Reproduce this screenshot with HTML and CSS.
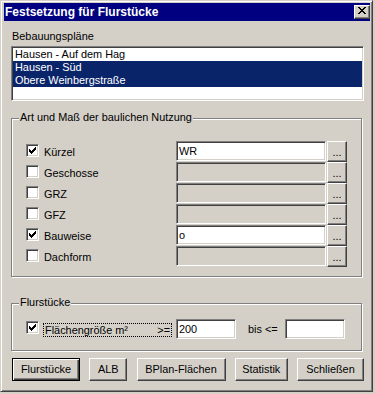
FILE: index.html
```html
<!DOCTYPE html>
<html lang="de">
<head>
<meta charset="utf-8">
<title>Festsetzung für Flurstücke</title>
<link rel="stylesheet" href="styles.css">
</head>
<body>
<div class="window">
  <div class="titlebar">
    <span class="title">Festsetzung für Flurstücke</span>
    <div class="close">
      <svg width="8" height="7" viewBox="0 0 8 7" shape-rendering="crispEdges"><path fill="#000" d="M0 0h2v1H0zM6 0h2v1H6zM1 1h2v1H1zM5 1h2v1H5zM2 2h4v1H2zM3 3h2v1H3zM2 4h4v1H2zM1 5h2v1H1zM5 5h2v1H5zM0 6h2v1H0zM6 6h2v1H6z"/></svg>
    </div>
  </div>
  <div class="content">
    <div class="plans-lbl">Bebauungspläne</div>
    <div class="listbox">
      <div class="item">Hausen - Auf dem Hag</div>
      <div class="item sel">Hausen - Süd</div>
      <div class="item sel">Obere Weinbergstraße</div>
    </div>

    <div class="group g1">
      <span class="legend">Art und Maß der baulichen Nutzung</span>
      <div class="row">
        <span class="cb"><svg width="7" height="7" viewBox="0 0 7 7" shape-rendering="crispEdges"><path fill="#000" d="M6 0h1v1H6zM5 1h2v1H5zM0 2h1v1H0zM4 2h3v1H4zM0 3h2v1H0zM3 3h3v1H3zM0 4h5v1H0zM1 5h3v1H1zM2 6h1v1H2z"/></svg></span>
        <span class="rlabel">Kürzel</span>
        <span class="field">WR</span>
        <span class="dots btn3d">...</span>
      </div>
      <div class="row">
        <span class="cb"></span>
        <span class="rlabel">Geschosse</span>
        <span class="field disabled"></span>
        <span class="dots btn3d">...</span>
      </div>
      <div class="row">
        <span class="cb"></span>
        <span class="rlabel">GRZ</span>
        <span class="field disabled"></span>
        <span class="dots btn3d">...</span>
      </div>
      <div class="row">
        <span class="cb"></span>
        <span class="rlabel">GFZ</span>
        <span class="field disabled"></span>
        <span class="dots btn3d">...</span>
      </div>
      <div class="row">
        <span class="cb"><svg width="7" height="7" viewBox="0 0 7 7" shape-rendering="crispEdges"><path fill="#000" d="M6 0h1v1H6zM5 1h2v1H5zM0 2h1v1H0zM4 2h3v1H4zM0 3h2v1H0zM3 3h3v1H3zM0 4h5v1H0zM1 5h3v1H1zM2 6h1v1H2z"/></svg></span>
        <span class="rlabel">Bauweise</span>
        <span class="field">o</span>
        <span class="dots btn3d">...</span>
      </div>
      <div class="row">
        <span class="cb"></span>
        <span class="rlabel">Dachform</span>
        <span class="field disabled"></span>
        <span class="dots btn3d">...</span>
      </div>
    </div>

    <div class="group g2">
      <span class="legend">Flurstücke</span>
      <div class="row2">
        <span class="cb"><svg width="7" height="7" viewBox="0 0 7 7" shape-rendering="crispEdges"><path fill="#000" d="M6 0h1v1H6zM5 1h2v1H5zM0 2h1v1H0zM4 2h3v1H4zM0 3h2v1H0zM3 3h3v1H3zM0 4h5v1H0zM1 5h3v1H1zM2 6h1v1H2z"/></svg></span>
        <span class="focus"><span>Flächengröße m²</span><span>&gt;=</span></span>
        <span class="field small">200</span>
        <span class="bis">bis &lt;=</span>
        <span class="field small"></span>
      </div>
    </div>

    <div class="buttons">
      <span class="btn default w1">Flurstücke</span>
      <span class="btn btn3d w2">ALB</span>
      <span class="btn btn3d w3">BPlan-Flächen</span>
      <span class="btn btn3d w4">Statistik</span>
      <span class="btn btn3d w5">Schließen</span>
    </div>
  </div>
</div>
</body>
</html>
```

FILE: styles.css
```css
* {
  box-sizing: border-box;
}

html,
body {
  margin: 0;
}

body {
  background: #d4d0c8;
  font-family: "Liberation Sans", Arial, sans-serif;
  font-size: 10.9px;
  line-height: 13px;
  color: #000;
}

.window {
  width: 373px;
  height: 392px;
  border: 1px solid;
  border-color: #d4d0c8 #404040 #404040 #d4d0c8;
  box-shadow: inset 1px 1px #fff, inset -1px -1px #808080;
  padding: 2px 2px 2px 3px;
  background: #d4d0c8;
}

.titlebar {
  height: 18px;
  background: #000080;
  display: flex;
  align-items: flex-start;
  justify-content: space-between;
  padding-left: 1px;
}

.title {
  color: #fff;
  font-weight: bold;
  font-size: 12px;
  line-height: 18px;
  white-space: nowrap;
}

.close {
  width: 16px;
  height: 14px;
  margin-top: 2px;
  background: #d4d0c8;
  border: 1px solid;
  border-color: #fff #404040 #404040 #fff;
  box-shadow: inset -1px -1px #808080;
  padding: 1px 0 0 3px;
}

.close svg {
  display: block;
}

.content {
  padding-left: 7px;
}

.plans-lbl {
  margin-top: 9px;
  padding-left: 1px;
  height: 13px;
}

.listbox {
  margin-top: 3px;
  width: 353px;
  height: 55px;
  background: #fff;
  border: 1px solid;
  border-color: #808080 #fff #fff #808080;
  box-shadow: inset 1px 1px #404040, inset -1px -1px #d4d0c8;
  padding: 1px;
}

.item {
  height: 13px;
  line-height: 12px;
  padding-left: 2px;
  white-space: nowrap;
}

.item.sel {
  background: #0a246a;
  color: #fff;
}

.group {
  position: relative;
  width: 351px;
  border: 1px solid #808080;
  box-shadow: inset 1px 1px #fff, 1px 1px #fff;
  padding-left: 14px;
}

.legend {
  position: absolute;
  top: -8px;
  left: 7px;
  padding: 0 1px;
  background: #d4d0c8;
  line-height: 13px;
  white-space: nowrap;
}

.g1 {
  margin-top: 17px;
  height: 159px;
  padding-top: 22px;
}

.row {
  display: flex;
  align-items: flex-start;
  height: 21px;
}

.cb {
  width: 13px;
  height: 13px;
  margin-top: 3px;
  flex: none;
  background: #fff;
  border: 1px solid;
  border-color: #808080 #fff #fff #808080;
  box-shadow: inset 1px 1px #404040, inset -1px -1px #d4d0c8;
  padding: 2px 0 0 2px;
}

.cb svg {
  display: block;
}

.rlabel {
  margin-left: 5px;
  width: 132px;
  line-height: 20px;
  padding-top: 1px;
  flex: none;
}

.field {
  width: 150px;
  height: 20px;
  flex: none;
  background: #fff;
  border: 1px solid;
  border-color: #808080 #fff #fff #808080;
  box-shadow: inset 1px 1px #404040, inset -1px -1px #d4d0c8;
  padding-left: 2px;
  line-height: 18px;
}

.field.disabled {
  background: #d4d0c8;
}

.btn3d {
  background: #d4d0c8;
  border: 1px solid;
  border-color: #fff #404040 #404040 #fff;
  box-shadow: inset -1px -1px #808080;
}

.dots {
  width: 20px;
  height: 21px;
  margin-left: 1px;
  flex: none;
  text-align: center;
  line-height: 21px;
}

.g2 {
  margin-top: 26px;
  height: 48px;
  padding-top: 15px;
}

.row2 {
  display: flex;
  align-items: flex-start;
  height: 20px;
}

.row2 .cb {
  margin-top: 2px;
}

.focus {
  margin-left: 4px;
  margin-top: 4px;
  width: 129px;
  height: 14px;
  flex: none;
  border: 1px dotted #000;
  display: flex;
  justify-content: space-between;
  padding: 0 1px 0 1px;
  line-height: 12px;
  white-space: nowrap;
}

.field.small {
  width: 60px;
  margin-left: 4px;
}

.bis {
  margin-left: 12px;
  width: 33px;
  line-height: 20px;
  flex: none;
}

.buttons {
  margin-top: 7px;
  margin-left: 1px;
  width: 352px;
  height: 23px;
  display: flex;
  justify-content: space-between;
}

.btn {
  height: 23px;
  text-align: center;
  line-height: 20px;
  white-space: nowrap;
}

.btn.default {
  background: #d4d0c8;
  border: 1px solid #000;
  box-shadow: inset 1px 1px #fff, inset -1px -1px #404040, inset -2px -2px #808080;
}

.w1 { width: 68px; }
.w2 { width: 38px; }
.w3 { width: 89px; }
.w4 { width: 53px; }
.w5 { width: 67px; }
```
